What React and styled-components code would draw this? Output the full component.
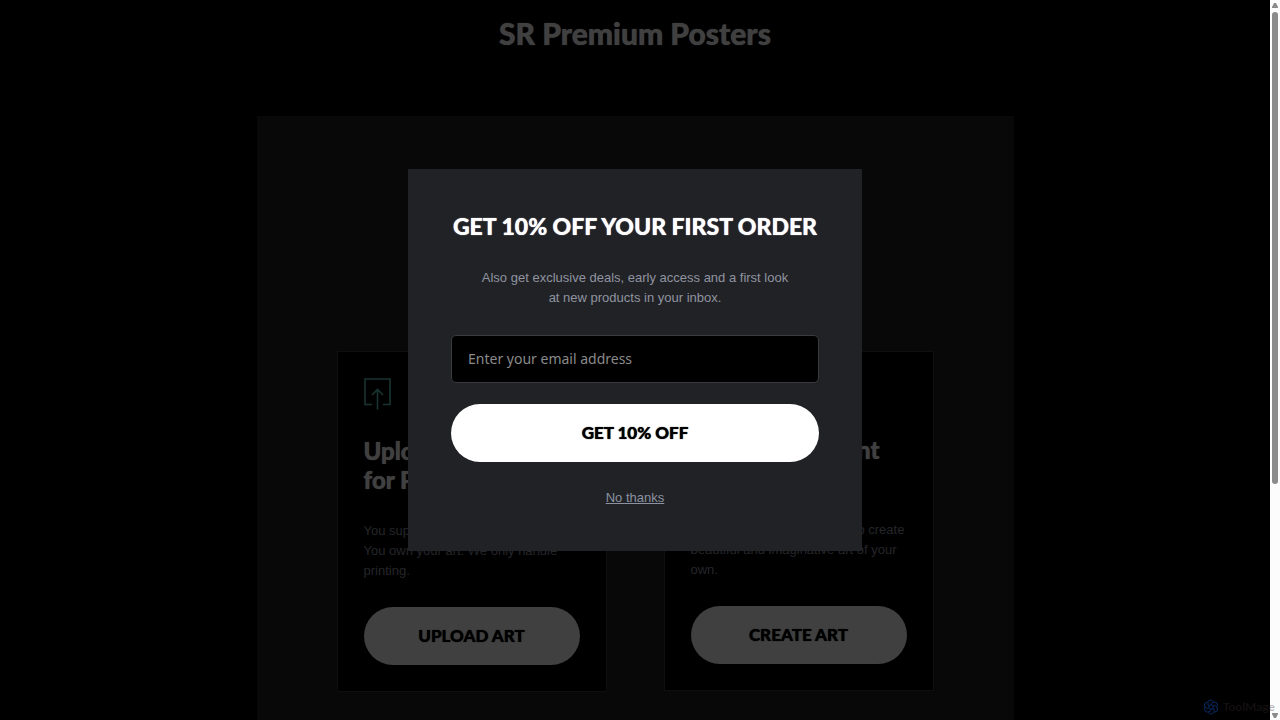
import React from 'react';
import styled, { createGlobalStyle, css } from 'styled-components';

const GlobalStyle = createGlobalStyle`
    * {
        box-sizing: border-box;
    }
    body {
        margin: 0;
        background: #000;
        font-family: 'Liberation Sans', Arial, sans-serif;
        font-size: 13px;
        line-height: 20px;
        color: #9094a0;
    }
    h1, h2, p {
        margin: 0;
    }
`

const heading = css`
    font-family: Lato, 'Open Sans', sans-serif;
    font-weight: 900;
    text-shadow: 0 0 1px currentColor;
`

const Window = styled.div`
    display: grid;
    grid-template-columns: 1fr 10px;
    height: 100vh;
    overflow: hidden;
    position: relative;
`

const Page = styled.div`
    overflow: hidden;
    padding: 0 24px;
`

const Header = styled.header`
    height: 116px;
    padding-top: 15px;
    text-align: center;
`

const PageTitle = styled.h1`
    ${heading}
    font-size: 30px;
    line-height: 36px;
    color: #fff;
`

const Panel = styled.main`
    display: flex;
    justify-content: center;
    align-items: flex-start;
    gap: 57px;
    max-width: 757px;
    min-height: 800px;
    margin: 0 auto;
    padding: 235px 24px 80px;
    background: #212226;
`

const Card = styled.section`
    display: flex;
    flex-direction: column;
    align-items: flex-start;
    width: 270px;
    padding: 26px;
    border: 1px solid #3c3d42;
    background: #000;
`

const CardTitle = styled.h2`
    ${heading}
    margin-top: 26px;
    font-size: 24px;
    line-height: 29px;
    color: #fff;
`

const CardText = styled.p`
    margin: 27px 0 26px;
`

const PillButton = styled.button`
    ${heading}
    width: 100%;
    height: 58px;
    border: 0;
    border-radius: 29px;
    background: #fff;
    color: #000;
    font-size: 17px;
    line-height: 24px;
    cursor: pointer;
`

const Overlay = styled.div`
    position: absolute;
    inset: 0 10px 0 0;
    display: flex;
    align-items: center;
    justify-content: center;
    background: rgba(0, 0, 0, 0.75);
`

const Modal = styled.form`
    display: flex;
    flex-direction: column;
    align-items: center;
    width: 100%;
    max-width: 454px;
    padding: 43px;
    border-radius: 1px;
    background: #212226;
    text-align: center;
`

const ModalTitle = styled.h2`
    ${heading}
    font-size: 23px;
    line-height: 29px;
    white-space: nowrap;
    color: #fff;
`

const ModalText = styled.p`
    margin: 27px 0;
`

const EmailInput = styled.input`
    width: 100%;
    height: 48px;
    margin-bottom: 21px;
    padding: 0 16px 2px;
    border: 1px solid #3a3b3f;
    border-radius: 5px;
    background: #000;
    color: #fff;
    font-family: 'Noto Sans', 'Open Sans', sans-serif;
    font-size: 14px;

    &::placeholder {
        color: #8a8a8a;
        opacity: 1;
    }
`

const DismissLink = styled.a`
    margin-top: 26px;
    color: #8c92a0;
    text-decoration: underline;
`

const Scrollbar = styled.div`
    display: flex;
    flex-direction: column;
    align-items: center;
    padding: 3px 0 2px;
    background: #fcfcfc;
`

const Thumb = styled.div`
    width: 6px;
    height: 66%;
    margin: 4px 0 auto;
    border-radius: 3px;
    background: #8b8b8b;
`

const Watermark = styled.div`
    position: absolute;
    right: 5px;
    bottom: 4px;
    display: flex;
    align-items: center;
    gap: 4px;
    font-family: Lato, sans-serif;
    font-size: 12px;
    line-height: 18px;
    font-weight: 700;
    color: rgba(55, 45, 45, 0.35);
`

const UploadIcon = () => (
    <svg width="28" height="32" viewBox="0 0 28 32" fill="none" stroke="#62cfc2" strokeWidth="1.6">
        <path d="M8 26.500H1V1h25v25.500H19" />
        <path d="M13.500 31.500V11.500M8 17l5.500-5.500L19 17" />
    </svg>
)

const CreateIcon = () => (
    <svg width="28" height="31" viewBox="0 0 28 31" fill="none" stroke="#62cfc2" strokeWidth="1.6">
        <path d="M1 27l16-16 3 3L4 30zM22 2v8M18 6h8" />
    </svg>
)

const Arrow = ({ down }) => (
    <svg width="6" height="5" viewBox="0 0 6 5" fill="#8b8b8b">
        <path d={down ? 'M0 0h6v1L4 5H2L0 1z' : 'M2 0h2l2 4v1H0V4z'} />
    </svg>
)

const Logo = () => (
    <svg width="16" height="16" viewBox="0 0 16 16" fill="none" stroke="#08285c" strokeWidth="1">
        {[0, 60, 120, 180, 240, 300].map(angle => (
            <path key={angle} d="M5 6.500V3.500Q5.500 1 8 1Q10 1 11 3M8 5.500L11 7.500" transform={`rotate(${angle} 8 8)`} />
        ))}
    </svg>
)

const App = () => {

    return (
        <>
            <GlobalStyle />
            <Window>
                <Page>
                    <Header>
                        <PageTitle>SR Premium Posters</PageTitle>
                    </Header>
                    <Panel>
                        <Card>
                            <UploadIcon />
                            <CardTitle>Upload Your Art<br />for Printing</CardTitle>
                            <CardText>You supply the artwork.<br />You own your art. We only handle printing.</CardText>
                            <PillButton type="button">UPLOAD ART</PillButton>
                        </Card>
                        <Card>
                            <CreateIcon />
                            <CardTitle>Create Any Talent<br />and AI</CardTitle>
                            <CardText>Use our smart art generator to create beautiful and imaginative art of your own.</CardText>
                            <PillButton type="button">CREATE ART</PillButton>
                        </Card>
                    </Panel>
                </Page>
                <Scrollbar aria-hidden="true">
                    <Arrow />
                    <Thumb />
                    <Arrow down />
                </Scrollbar>
                <Overlay>
                    <Modal role="dialog" aria-labelledby="offer-title" onSubmit={e => e.preventDefault()}>
                        <ModalTitle id="offer-title">GET 10% OFF YOUR FIRST ORDER</ModalTitle>
                        <ModalText>Also get exclusive deals, early access and a first look<br />at new products in your inbox.</ModalText>
                        <EmailInput type="email" aria-label="Enter your email address" placeholder="Enter your email address" />
                        <PillButton type="submit">GET 10% OFF</PillButton>
                        <DismissLink href="#">No thanks</DismissLink>
                    </Modal>
                </Overlay>
                <Watermark>
                    <Logo />
                    <span>ToolMage</span>
                </Watermark>
            </Window>
        </>
    )
}

export default App;
